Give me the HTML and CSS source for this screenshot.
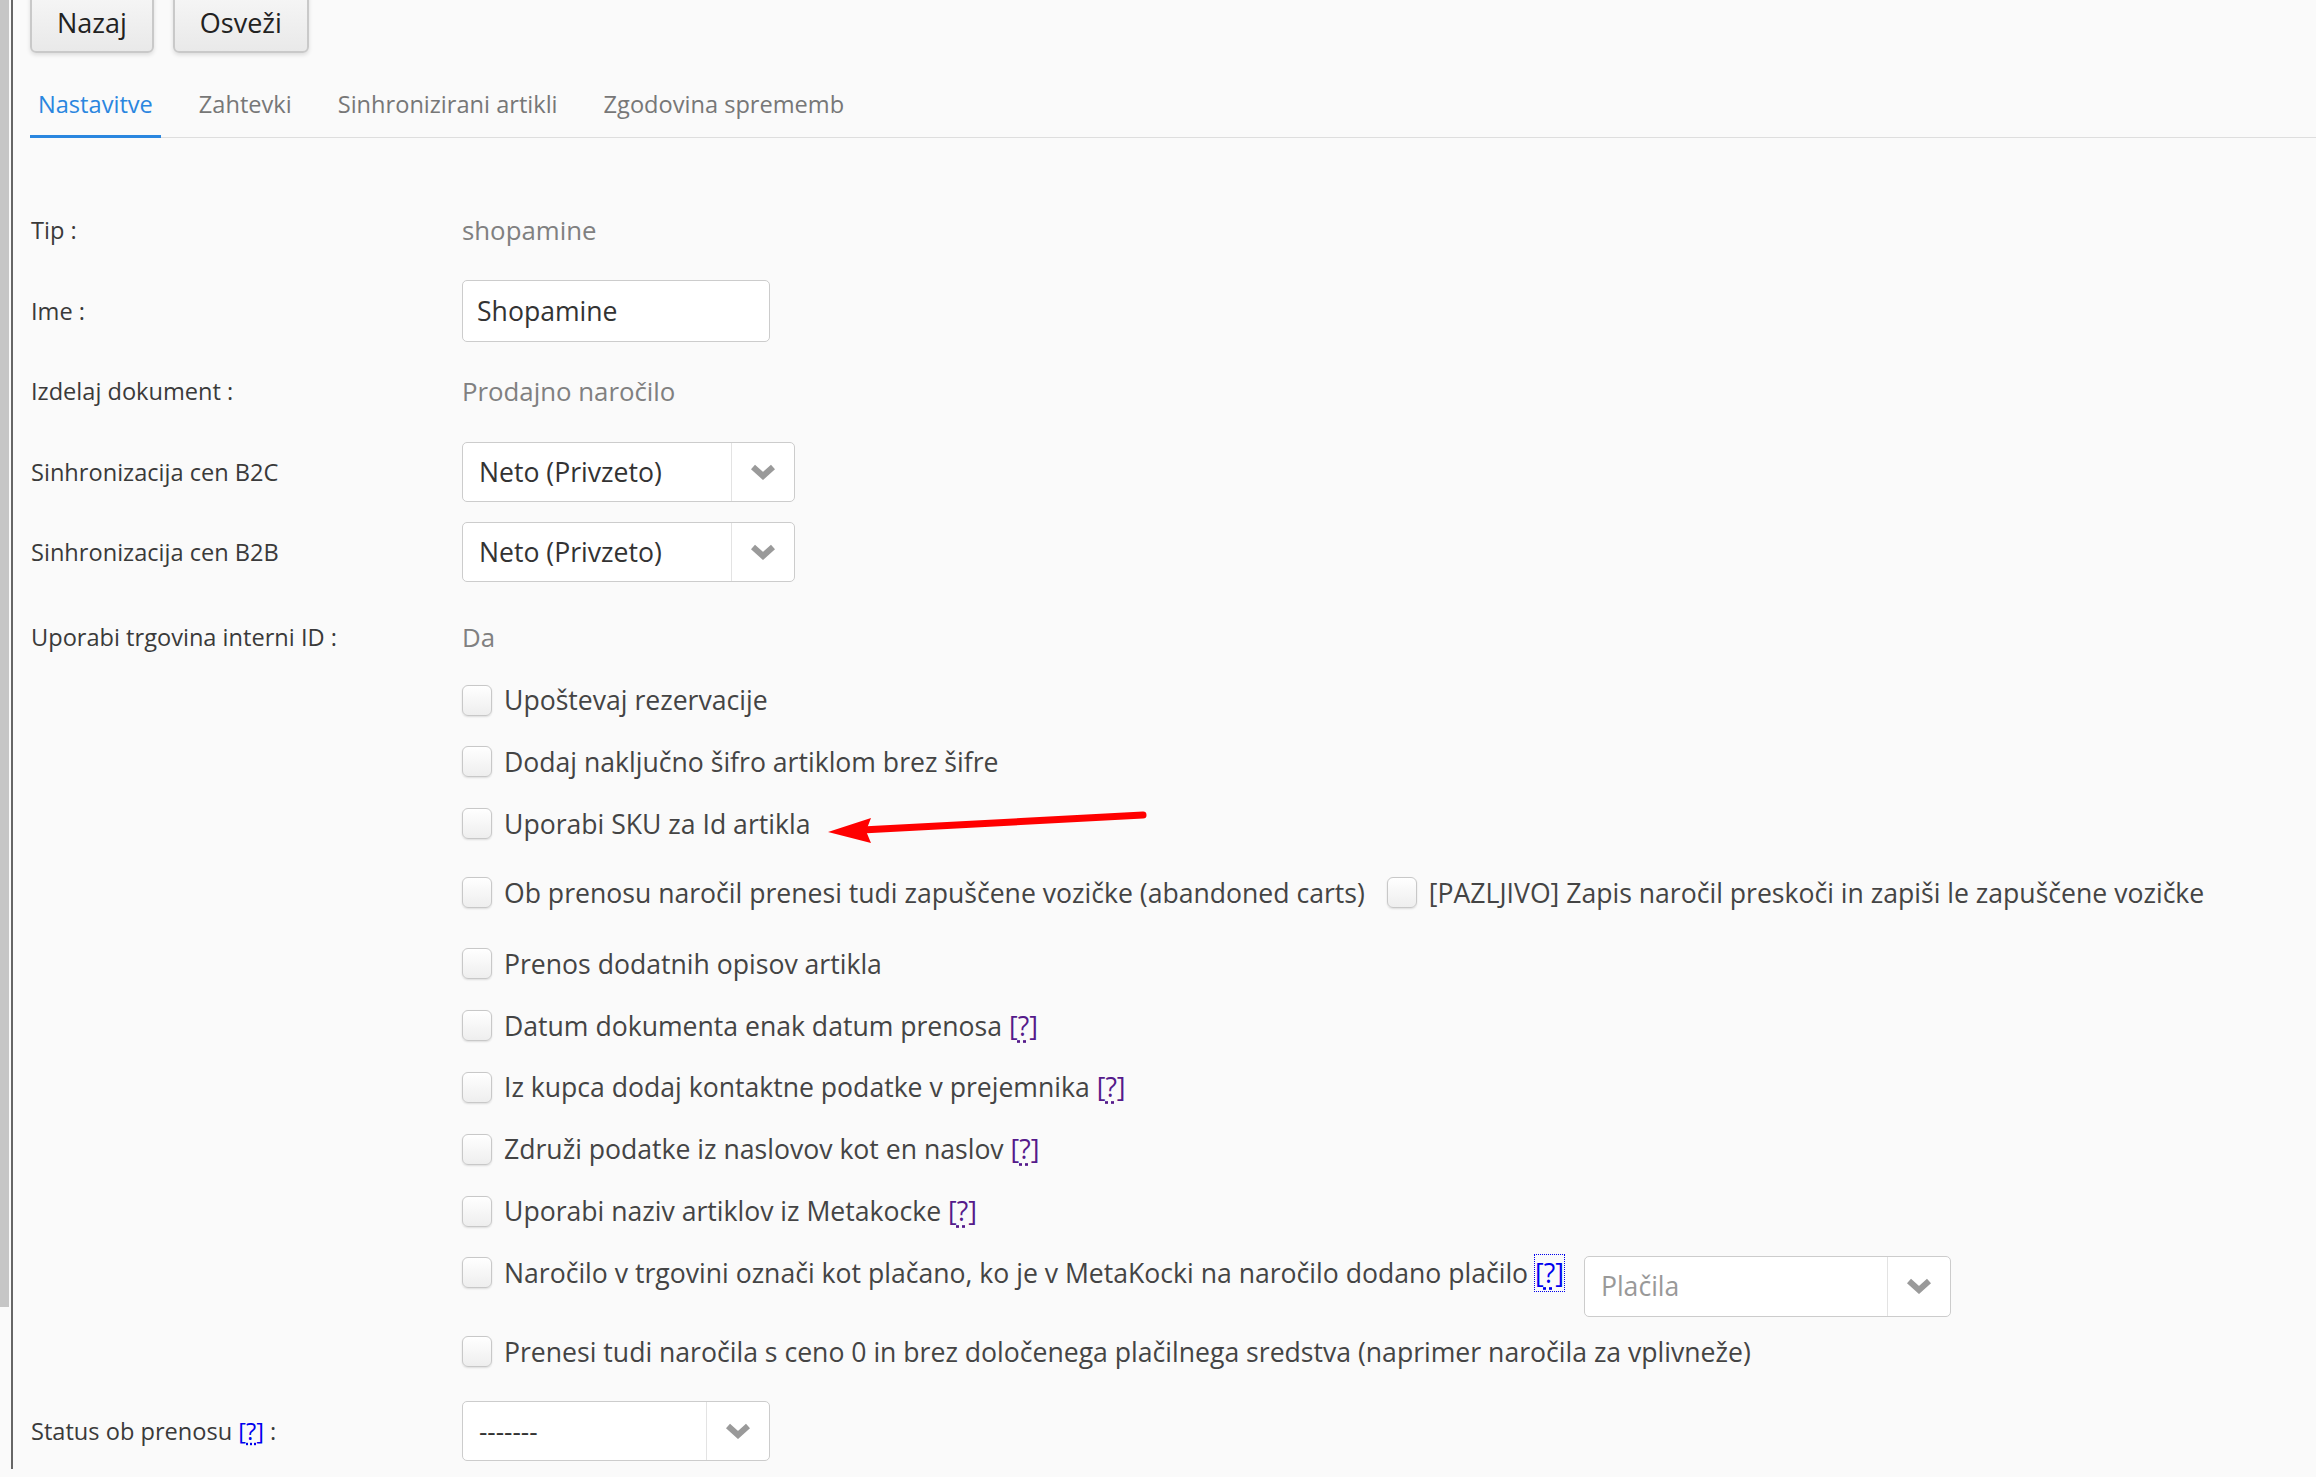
FILE: index.html
```html
<!DOCTYPE html>
<html lang="sl">
<head>
  <meta charset="UTF-8" />
  <meta name="viewport" content="width=device-width, initial-scale=1.0"/>
  <title>Nastavitve povezave</title>
  <link rel="stylesheet" href="styles.css">
</head>
<body>
  <div class="thumb"></div>

  <div class="page">
    <div class="toolbar">
      <button class="btn">Nazaj</button>
      <button class="btn">Osveži</button>
    </div>

    <ul class="tabs">
      <li class="tab active">Nastavitve</li>
      <li class="tab">Zahtevki</li>
      <li class="tab">Sinhronizirani artikli</li>
      <li class="tab">Zgodovina sprememb</li>
    </ul>

    <div class="form">
      <div class="field">
        <label>Tip :</label>
        <div class="value">shopamine</div>
      </div>
      <div class="field">
        <label>Ime :</label>
        <input class="text-input" type="text" value="Shopamine" />
      </div>
      <div class="field">
        <label>Izdelaj dokument :</label>
        <div class="value">Prodajno naročilo</div>
      </div>
      <div class="field">
        <label>Sinhronizacija cen B2C</label>
        <div class="select sel-wide">
          <span class="select-value">Neto (Privzeto)</span>
          <span class="select-arrow"><svg width="26" height="16" viewBox="0 0 26 16"><polyline points="3,3 13,12 23,3" /></svg></span>
        </div>
      </div>
      <div class="field">
        <label>Sinhronizacija cen B2B</label>
        <div class="select sel-wide">
          <span class="select-value">Neto (Privzeto)</span>
          <span class="select-arrow"><svg width="26" height="16" viewBox="0 0 26 16"><polyline points="3,3 13,12 23,3" /></svg></span>
        </div>
      </div>
      <div class="field field-last">
        <label>Uporabi trgovina interni ID :</label>
        <div class="value">Da</div>
      </div>

      <div class="options">
        <div class="opt"><input type="checkbox" /><span>Upoštevaj rezervacije</span></div>
        <div class="opt"><input type="checkbox" /><span>Dodaj naključno šifro artiklom brez šifre</span></div>
        <div class="opt"><input type="checkbox" /><span>Uporabi SKU za Id artikla</span></div>
        <div class="opt opt-pair">
          <input type="checkbox" /><span>Ob prenosu naročil prenesi tudi zapuščene vozičke (abandoned carts)</span>
          <input class="second" type="checkbox" /><span>[PAZLJIVO] Zapis naročil preskoči in zapiši le zapuščene vozičke</span>
        </div>
        <div class="opt"><input type="checkbox" /><span>Prenos dodatnih opisov artikla</span></div>
        <div class="opt"><input type="checkbox" /><span>Datum dokumenta enak datum prenosa <a class="help visited" href="#">[<span class="q">?</span>]</a></span></div>
        <div class="opt"><input type="checkbox" /><span>Iz kupca dodaj kontaktne podatke v prejemnika <a class="help visited" href="#">[<span class="q">?</span>]</a></span></div>
        <div class="opt"><input type="checkbox" /><span>Združi podatke iz naslovov kot en naslov <a class="help visited" href="#">[<span class="q">?</span>]</a></span></div>
        <div class="opt"><input type="checkbox" /><span>Uporabi naziv artiklov iz Metakocke <a class="help visited" href="#">[<span class="q">?</span>]</a></span></div>
        <div class="opt opt-select">
          <input type="checkbox" /><span>Naročilo v trgovini označi kot plačano, ko je v MetaKocki na naročilo dodano plačilo <a class="help focused" href="#">[<span class="q">?</span>]</a></span>
          <div class="select sel-pay">
            <span class="select-value placeholder">Plačila</span>
            <span class="select-arrow"><svg width="26" height="16" viewBox="0 0 26 16"><polyline points="3,3 13,12 23,3" /></svg></span>
          </div>
        </div>
        <div class="opt"><input type="checkbox" /><span>Prenesi tudi naročila s ceno 0 in brez določenega plačilnega sredstva (naprimer naročila za vplivneže)</span></div>
      </div>

      <div class="field">
        <label>Status ob prenosu <a class="help" href="#">[<span class="q">?</span>]</a> :</label>
        <div class="select sel-status">
          <span class="select-value small">-------</span>
          <span class="select-arrow"><svg width="26" height="16" viewBox="0 0 26 16"><polyline points="3,3 13,12 23,3" /></svg></span>
        </div>
      </div>
    </div>
  </div>

  <svg class="annotation" width="2316" height="1477" viewBox="0 0 2316 1477">
    <line x1="1143" y1="815" x2="862" y2="830" stroke="#ff0000" stroke-width="7" stroke-linecap="round" />
    <polygon points="828,832 871,818 866,831 871,843" fill="#ff0000" />
  </svg>
</body>
</html>
```

FILE: styles.css
```css
html, body {
  margin: 0;
  padding: 0;
}

body {
  background-color: #fafafa;
  font-family: 'Open Sans', 'Noto Sans', sans-serif;
  color: #333;
  overflow: hidden;
  position: relative;
}

.thumb {
  position: absolute;
  left: 0;
  top: 0;
  width: 9px;
  height: 1307px;
  background-color: #c6c6c6;
}

.page {
  margin-left: 11px;
  border-left: 2px solid #666;
  padding-left: 17px;
  min-height: 1477px;
  box-sizing: border-box;
}

.toolbar {
  display: flex;
  gap: 19px;
  margin-top: -8px;
}

.btn {
  height: 61px;
  padding: 0 25px;
  line-height: 57px;
  font-family: inherit;
  font-size: 27px;
  color: #222;
  background: linear-gradient(#f6f6f6, #e9e9e9);
  border: 2px solid #c9c9c9;
  border-radius: 6px;
  box-shadow: 0 2px 4px rgba(0, 0, 0, 0.12);
  cursor: pointer;
}

.tabs {
  display: flex;
  list-style: none;
  margin: 35px 0 0;
  padding: 0;
  border-bottom: 1px solid #dedede;
}

.tab {
  font-size: 23.6px;
  line-height: 32px;
  padding: 0 8px 15px;
  margin-right: 30px;
  margin-bottom: -1px;
  border-bottom: 3px solid transparent;
  color: #777;
}

.tab.active {
  color: #2a86df;
  border-bottom-color: #2a86df;
}

.form {
  margin-top: 61px;
}

.field {
  display: grid;
  grid-template-columns: 432px auto;
  align-items: center;
  justify-items: start;
  min-height: 62px;
  margin-bottom: 18.5px;
}

.field-last {
  margin-top: 23px;
  margin-bottom: 12px;
}

.field label {
  font-size: 23.6px;
  color: #3a3a3a;
  padding-left: 1px;
}

.value {
  font-size: 25.8px;
  color: #808080;
}

.text-input {
  width: 308px;
  height: 62px;
  box-sizing: border-box;
  padding: 0 14px;
  font-family: inherit;
  font-size: 26.6px;
  color: #333;
  background: #fff;
  border: 1px solid #ccc;
  border-radius: 5px;
}

.select {
  display: inline-flex;
  height: 60px;
  box-sizing: border-box;
  background: #fff;
  border: 1px solid #ccc;
  border-radius: 5px;
}

.sel-wide {
  width: 333px;
}

.sel-status {
  width: 308px;
}

.sel-pay {
  width: 367px;
  height: 61px;
  margin-left: 20px;
  margin-top: 3px;
}

.select-value {
  flex: 1;
  padding: 0 16px;
  line-height: 58px;
  font-size: 26.6px;
  color: #333;
}

.select-value.placeholder {
  color: #999;
}

.select-value.small {
  font-size: 26px;
}

.select-arrow {
  width: 62px;
  border-left: 1px solid #e3e3e3;
  display: flex;
  align-items: center;
  justify-content: center;
}

.select-arrow polyline {
  fill: none;
  stroke: #9a9a9a;
  stroke-width: 6;
}

.options {
  display: flex;
  flex-direction: column;
  padding-left: 432px;
  margin-bottom: 6px;
}

.opt {
  display: flex;
  align-items: flex-start;
  min-height: 40px;
  margin-bottom: 21.8px;
  font-size: 26.6px;
  line-height: 40px;
  color: #444;
  white-space: nowrap;
}

.opt input[type="checkbox"] {
  appearance: none;
  -webkit-appearance: none;
  flex: none;
  width: 30px;
  height: 31px;
  margin: 4.5px 12px 0 0;
  background: linear-gradient(#ffffff, #eeeeee);
  border: 1px solid #c8c8c8;
  border-radius: 6px;
  box-shadow: 0 1px 2px rgba(0, 0, 0, 0.12);
}

.opt input.second {
  margin-left: 22px;
}

.opt-pair {
  margin-top: 7.5px;
  margin-bottom: 31px;
}

.opt-select {
  margin-bottom: 15px;
}

.help {
  color: #0000ee;
  text-decoration: none;
}

.help.visited {
  color: #551a8b;
}

.help.focused {
  outline: 1px dotted #0000ee;
  outline-offset: 0;
}

.help .q {
  text-decoration: underline dotted;
  text-underline-offset: 4px;
}

.annotation {
  position: absolute;
  left: 0;
  top: 0;
  pointer-events: none;
}
```
